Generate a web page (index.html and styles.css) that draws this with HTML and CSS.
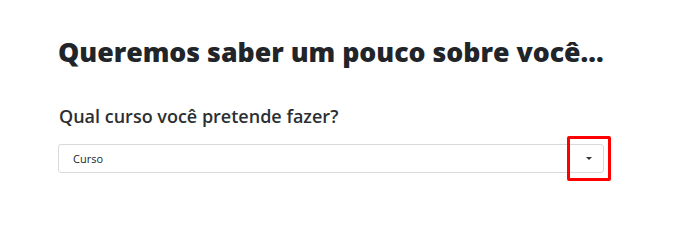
FILE: index.html
```html
<!DOCTYPE html>
<html lang="pt-BR">
<head>
<meta charset="utf-8">
<link rel="stylesheet" href="styles.css">
</head>
<body>
<main class="page">
  <h1 class="title">Queremos saber um pouco sobre você...</h1>
  <h2 class="question">Qual curso você pretende fazer?</h2>
  <div class="select">
    <span class="select-value">Curso</span>
    <span class="select-arrow"></span>
    <span class="highlight"></span>
  </div>
</main>
</body>
</html>
```
FILE: styles.css
```css
html, body {
  margin: 0;
  padding: 0;
  background: #ffffff;
}
body {
  min-height: 228px;
  font-family: "Open Sans", "Liberation Sans", sans-serif;
  color: #212529;
}
.page {
  padding: 34px 0 48px 58px;
  width: 546px;
}
.title {
  margin: 0;
  font-size: 26.7px;
  font-weight: 800;
  line-height: 36px;
  color: #212529;
  white-space: nowrap;
}
.question {
  margin: 34px 0 0 1px;
  font-size: 18px;
  font-weight: 600;
  line-height: 24px;
  color: #2b2f33;
}
.select {
  position: relative;
  margin-top: 16px;
  height: 27px;
  border: 1px solid #d9d9d9;
  border-radius: 3px;
  display: flex;
  align-items: center;
  justify-content: space-between;
  padding: 0 11px 0 14px;
}
.select-value {
  font-size: 11px;
  color: #212529;
}
.select-arrow {
  display: block;
  width: 0;
  height: 0;
  border-left: 3px solid transparent;
  border-right: 3px solid transparent;
  border-top: 3px solid #333;
}
.highlight {
  position: absolute;
  display: block;
  box-sizing: border-box;
  left: 508px;
  top: -9px;
  width: 44px;
  height: 45px;
  border: 3px solid #ff0000;
  border-radius: 2px;
}
```
